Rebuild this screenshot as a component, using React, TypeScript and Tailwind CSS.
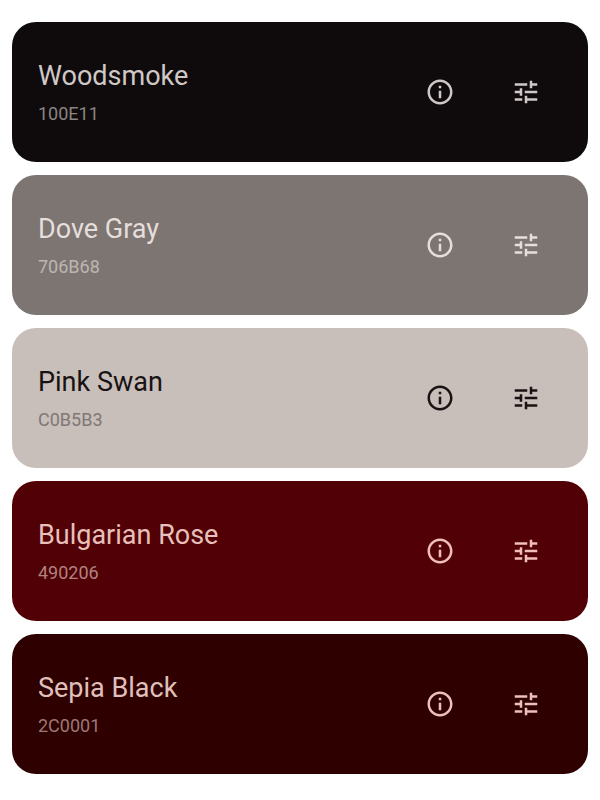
import { MdInfoOutline, MdTune } from "react-icons/md";

const swatches = [
  { name: "Woodsmoke", hex: "100E11", card: "bg-[#0f0b0c]", title: "text-[#d0c8c6]", code: "text-[#8a8482]", icon: "text-[#d0c8c6]" },
  { name: "Dove Gray", hex: "706B68", card: "bg-[#7d7572]", title: "text-[#e6dedb]", code: "text-[#bdb5b2]", icon: "text-[#e6dedb]" },
  { name: "Pink Swan", hex: "C0B5B3", card: "bg-[#c8beba]", title: "text-[#181312]", code: "text-[#7f7775]", icon: "text-[#181312]" },
  { name: "Bulgarian Rose", hex: "490206", card: "bg-[#510005]", title: "text-[#e8c0bb]", code: "text-[#b08380]", icon: "text-[#f0bfbb]" },
  { name: "Sepia Black", hex: "2C0001", card: "bg-[#2e0000]", title: "text-[#e0c0bc]", code: "text-[#9c7876]", icon: "text-[#edc0bc]" },
];

export default function App() {
  return (
    <main className="min-h-screen bg-white px-3 pt-[22px] pb-6 font-['Roboto',sans-serif]">
      <ul className="flex flex-col gap-[13px]">
        {swatches.map((s) => (
          <li key={s.hex} className={`flex h-[140px] items-center justify-between rounded-3xl pl-[26px] pr-[47px] ${s.card}`}>
            <div className="flex flex-col gap-1 pt-1">
              <h2 className={`text-[27px] leading-9 ${s.title}`}>{s.name}</h2>
              <p className={`text-lg leading-8 ${s.code}`}>{s.hex}</p>
            </div>
            <div className={`flex gap-14 ${s.icon}`}>
              <button type="button" aria-label={`About ${s.name}`}>
                <MdInfoOutline className="size-[30px]" />
              </button>
              <button type="button" aria-label={`Adjust ${s.name}`}>
                <MdTune className="size-[30px]" />
              </button>
            </div>
          </li>
        ))}
      </ul>
    </main>
  );
}
